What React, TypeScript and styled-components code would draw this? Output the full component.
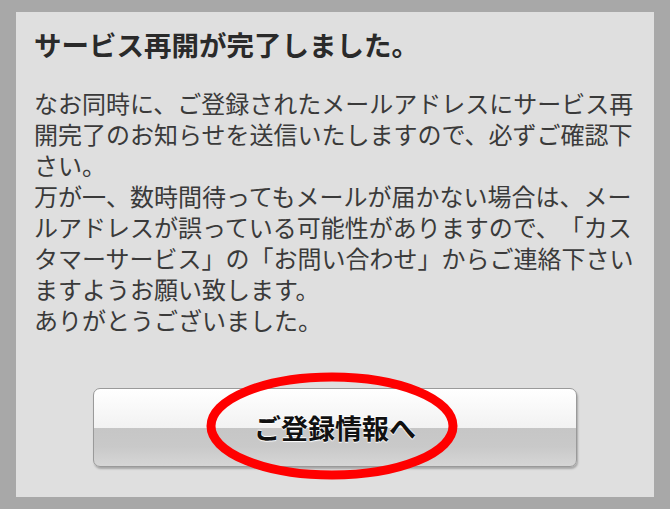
import React from "react";
import styled, { createGlobalStyle } from "styled-components";

const GlobalStyle = createGlobalStyle`
	html, body {
		margin: 0;
		padding: 0;
		background-color: #a8a8a8;
	}
	body {
		font-family: "Noto Sans CJK JP", "Noto Sans", sans-serif;
		text-spacing-trim: space-all;
	}
`;

const Page = styled.div`
	padding: 12px 16px;
	min-height: 509px;
	box-sizing: border-box;
	background-color: #a8a8a8;
`;

const Panel = styled.div`
	display: flex;
	flex-direction: column;
	background-color: #dfdfdf;
	padding: 15px 18px 30px;
	height: 485px;
	box-sizing: border-box;
`;

const Title = styled.h1`
	margin: 0;
	font-size: 27.5px;
	line-height: 34px;
	font-weight: 700;
	color: #2a2a2a;
	text-spacing-trim: space-all;
`;

const Body = styled.p`
	margin: 26px 0 0;
	font-size: 24px;
	line-height: 31px;
	color: #3a3a3a;
	width: 602px;
	text-spacing-trim: space-all;
`;

const ButtonRow = styled.div`
	position: relative;
	display: flex;
	justify-content: center;
	margin-top: auto;
`;

const Button = styled.button`
	width: 484px;
	height: 79px;
	border: 1px solid #9a9a9a;
	border-radius: 7px;
	background: linear-gradient(
		to bottom,
		#ffffff 0%,
		#f2f2f2 50%,
		#c6c6c6 50%,
		#c9c9c9 75%,
		#d6d6d6 100%
	);
	box-shadow: 1px 2px 2px rgba(0, 0, 0, 0.25);
	font-family: "Noto Sans CJK JP", sans-serif;
	font-size: 27px;
	font-weight: 700;
	color: #111;
	text-shadow: 0 1px 1px #fff, 0 -1px 1px #fff;
	cursor: pointer;
	padding: 0;
`;

const Mark = styled.svg`
	position: absolute;
	left: 50%;
	top: -16px;
	width: 252px;
	height: 108px;
	margin-left: -129px;
	pointer-events: none;
`;

export default function App() {
	return (
		<>
			<GlobalStyle />
			<Page>
				<Panel>
					<Title>サービス再開が完了しました。</Title>
					<Body>
						なお同時に、ご登録されたメールアドレスにサービス再開完了のお知らせを送信いたしますので、必ずご確認下さい。
						<br />
						万が一、数時間待ってもメールが届かない場合は、メールアドレスが誤っている可能性がありますので、「カスタマーサービス」の「お問い合わせ」からご連絡下さいますようお願い致します。
						<br />
						ありがとうございました。
					</Body>
					<ButtonRow>
						<Button>ご登録情報へ</Button>
						<Mark viewBox="0 0 252 108">
							<ellipse cx="126" cy="54" rx="121" ry="49" fill="none" stroke="#ff0000" strokeWidth="9" />
						</Mark>
					</ButtonRow>
				</Panel>
			</Page>
		</>
	);
}
